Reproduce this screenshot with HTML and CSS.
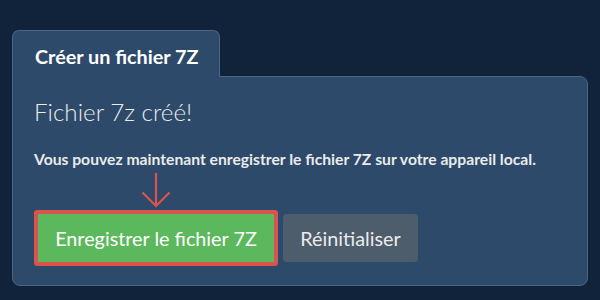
FILE: index.html
```html
<!DOCTYPE html>
<html lang="fr">
<head>
<meta charset="utf-8">
<link rel="stylesheet" href="styles.css">
</head>
<body>
<div class="wrap">
  <div class="tabs">
    <div class="tab">Créer un fichier 7Z</div>
  </div>
  <div class="card">
    <h2 class="title">Fichier 7z créé!</h2>
    <p class="text">Vous pouvez maintenant enregistrer le fichier 7Z sur votre appareil local.</p>
    <div class="actions">
      <div class="save-col">
        <svg class="arrow" width="30" height="36" viewBox="0 0 30 36">
          <path d="M15 1 V34 M1.5 20.5 L15 34 L28.5 20.5" fill="none" stroke="#d9534f" stroke-width="2.2"/>
        </svg>
        <button class="btn btn-save">Enregistrer le fichier 7Z</button>
      </div>
      <button class="btn btn-reset">Réinitialiser</button>
    </div>
  </div>
</div>
</body>
</html>
```
FILE: styles.css
```css
html, body {
  margin: 0;
  background: #10233a;
  width: 600px;
  height: 300px;
  overflow: hidden;
}
body {
  font-family: Lato, "Open Sans", sans-serif;
  color: #ebebeb;
}
.wrap {
  padding: 30px 12px 0 12px;
}
.tabs {
  display: flex;
}
.tab {
  position: relative;
  z-index: 1;
  width: 208px;
  height: 47px;
  box-sizing: border-box;
  margin-bottom: -1px;
  padding: 13px 0 0 22px;
  background: #2d4a6a;
  border: 1px solid #4b6685;
  border-bottom: none;
  border-radius: 7px 7px 0 0;
  color: #fff;
  font-weight: 700;
  font-size: 19.8px;
  line-height: 24px;
}
.card {
  background: #2d4a6a;
  border: 1px solid #4b6685;
  border-radius: 0 8px 8px 8px;
  padding: 20px 21px 0 21px;
  height: 210px;
  box-sizing: border-box;
}
.title {
  margin: 0;
  font-weight: 300;
  font-size: 24.2px;
  line-height: 30px;
}
.text {
  margin: 22px 0 0 0;
  font-weight: 700;
  font-size: 15.7px;
  line-height: 20px;
  white-space: nowrap;
}
.actions {
  display: flex;
  align-items: flex-end;
  gap: 9px;
  margin-top: 3px;
}
.save-col {
  display: flex;
  flex-direction: column;
  align-items: center;
  gap: 6px;
  padding-left: 4px;
}
.arrow {
  display: block;
}
.btn {
  border: none;
  font-family: Lato, "Open Sans", sans-serif;
  font-size: 19.8px;
  font-weight: 400;
  color: #fff;
  height: 48px;
  padding: 0;
  border-radius: 4px;
  white-space: nowrap;
}
.btn-save {
  background: #5cb85c;
  width: 236px;
  border-radius: 1px;
  box-shadow: 0 0 0 4px #d9534f;
}
.btn-reset {
  background: #4e5d6c;
  width: 135px;
  color: #ebebeb;
}
```
